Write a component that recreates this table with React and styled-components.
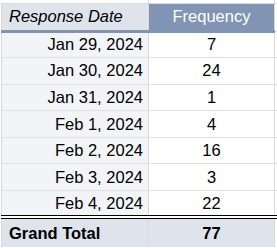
import React from "react";
import styled, { createGlobalStyle } from "styled-components";

const rows = [
  { date: "Jan 29, 2024", count: 7 },
  { date: "Jan 30, 2024", count: 24 },
  { date: "Jan 31, 2024", count: 1 },
  { date: "Feb 1, 2024", count: 4 },
  { date: "Feb 2, 2024", count: 16 },
  { date: "Feb 3, 2024", count: 3 },
  { date: "Feb 4, 2024", count: 22 },
];

const GlobalStyle = createGlobalStyle`
  body {
    margin: 0;
    background: #fff;
    font-family: "Liberation Sans", Arial, sans-serif;
  }
`;

const Sheet = styled.table`
  border-collapse: collapse;
  table-layout: fixed;
  width: 278px;
  margin-left: 1px;
  font-size: 16.5px;
  color: #000;
`;

const Spacer = styled.tr`
  height: 3px;
  td {
    padding: 0;
    border-bottom: 1px solid #dadada;
    border-right: 1px solid #dadada;
  }
  td:last-child {
    border-right: none;
  }
`;

const Cell = styled.td`
  padding: 0 5px;
  border-left: 1px solid #dadada;
  border-right: 1px solid #dadada;
  border-bottom: 1px solid #e1e1e1;
  white-space: nowrap;
  overflow: hidden;
  text-align: ${(p) => p.$align || "left"};
  background: ${(p) => p.$bg || "#fff"};
  &:last-child {
    border-right: none;
    padding: 0;
  }
`;

const HeadRow = styled.tr`
  height: 28px;
`;

const HeadLabel = styled(Cell)`
  font-style: italic;
  padding-left: 7px;
  border-bottom: 3px solid #8194b4;
`;

const HeadValue = styled(Cell)`
  color: #fff;
  border-bottom: 3px solid #8194b4;
`;

const DataRow = styled.tr`
  height: 26.6px;
  td {
    border-bottom: ${(p) => (p.$last ? "4px double #000" : "1px solid #e1e1e1")};
  }
`;

const TotalRow = styled.tr`
  height: 30px;
  font-weight: bold;
  td {
    border-bottom: none;
  }
  td:first-child {
    padding-left: 7px;
  }
`;

export default function App() {
  return (
    <>
      <GlobalStyle />
      <Sheet>
        <colgroup>
          <col style={{ width: 147 }} />
          <col style={{ width: 126 }} />
          <col style={{ width: 5 }} />
        </colgroup>
        <tbody>
          <Spacer>
            <td />
            <td />
            <td />
          </Spacer>
          <HeadRow>
            <HeadLabel $bg="#dfe3eb">Response Date</HeadLabel>
            <HeadValue $bg="#8194b4" $align="center">
              Frequency
            </HeadValue>
            <Cell />
          </HeadRow>
          {rows.map((r, i) => (
            <DataRow key={r.date} $last={i === rows.length - 1}>
              <Cell $bg="#f3f4f7" $align="right">
                {r.date}
              </Cell>
              <Cell $align="center">{r.count}</Cell>
              <Cell />
            </DataRow>
          ))}
          <TotalRow>
            <Cell $bg="#dfe3eb">Grand Total</Cell>
            <Cell $bg="#dfe3eb" $align="center">
              77
            </Cell>
            <Cell />
          </TotalRow>
        </tbody>
      </Sheet>
    </>
  );
}
